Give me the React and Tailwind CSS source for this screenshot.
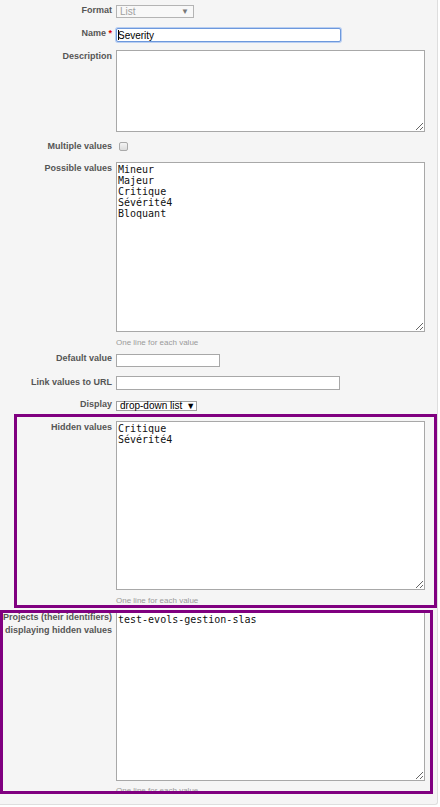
import React from 'react';

const SANS = { fontFamily: '"Liberation Sans", Arial, sans-serif' };
const MONO = { fontFamily: '"DejaVu Sans Mono", monospace' };

/** Right-aligned bold label in the 112px left column. */
function Label({ children, className = '' }) {
  return (
    <label
      style={SANS}
      className={`w-[112px] shrink-0 text-right text-[9px] leading-[13px] font-bold text-[#555] ${className}`}
    >
      {children}
    </label>
  );
}

function Hint({ className = '' }) {
  return (
    <p style={SANS} className={`ml-[116px] text-[8px] leading-[10px] text-[#9a9a9a] ${className}`}>
      One line for each value
    </p>
  );
}

function Area({ value = '', className = '' }) {
  return (
    <textarea
      readOnly
      value={value}
      style={MONO}
      className={`w-[309px] resize border border-[#a8a8a8] bg-white px-[1px] pt-[1px] text-[10px] leading-[11px] text-[#111] outline-none ${className}`}
    />
  );
}

export default function App() {
  return (
    <div className="w-[440px] h-[807px] bg-white">
      <div className="relative w-[438px] h-[805px] overflow-hidden bg-[#f5f5f5] border-r border-b border-[#dedede] rounded-br-[3px]">
        <div className="flex flex-col pt-[5px]">
          {/* Format */}
          <div className="flex items-start gap-[4px]">
            <Label className="mt-[-1px]">Format</Label>
            <div
              style={SANS}
              className="flex h-[13px] w-[78px] items-center justify-between border border-[#b4b4b4] bg-[#f8f8f8] pl-[3px] pr-[4px] text-[10px] text-[#a0a0a0]"
            >
              <span>List</span>
              <span className="text-[8px] text-[#777]">▼</span>
            </div>
          </div>

          {/* Name */}
          <div className="mt-[10px] flex items-start gap-[4px]">
            <Label className="mt-[-1px]">
              Name <span className="text-[#d00]">*</span>
            </Label>
            <div
              style={SANS}
              className="relative flex h-[14px] w-[225px] items-center rounded-[2px] border border-[#6d98dc] bg-white pl-[1px] text-[10px] text-black ring-1 ring-[#b9cff2]"
            >
              <span className="absolute left-[1px] top-[1px] h-[10px] w-px bg-black" />
              <span>Severity</span>
            </div>
          </div>

          {/* Description */}
          <div className="mt-[8px] flex items-start gap-[4px]">
            <Label>Description</Label>
            <Area className="h-[82px]" />
          </div>

          {/* Multiple values */}
          <div className="mt-[8px] flex items-start gap-[4px]">
            <Label>Multiple values</Label>
            <span className="ml-[3px] mt-[2px] h-[9px] w-[9px] rounded-[2px] border border-[#a9a9a9] bg-gradient-to-b from-[#f4f4f4] to-[#dcdcdc]" />
          </div>

          {/* Possible values */}
          <div className="mt-[9px] flex items-start gap-[4px]">
            <Label>Possible values</Label>
            <Area className="h-[170px]" value={'Mineur\nMajeur\nCritique\nSévérité4\nBloquant'} />
          </div>
          <Hint className="mt-[6px]" />

          {/* Default value */}
          <div className="mt-[6px] flex items-start gap-[4px]">
            <Label className="mt-[-2px]">Default value</Label>
            <div className="h-[13px] w-[104px] border border-[#a8a8a8] bg-white" />
          </div>

          {/* Link values to URL */}
          <div className="mt-[9px] flex items-start gap-[4px]">
            <Label>Link values to URL</Label>
            <div className="h-[14px] w-[224px] border border-[#a8a8a8] bg-white" />
          </div>

          {/* Display */}
          <div className="mt-[11px] flex items-start gap-[4px]">
            <Label className="mt-[-3px]">Display</Label>
            <div
              style={SANS}
              className="flex h-[10px] w-[81px] items-center border border-[#a0a0a0] bg-white pl-[3px] text-[10px] leading-[10px] text-black"
            >
              <span>drop-down list</span>
              <span className="ml-[4px] text-[9px]">▼</span>
            </div>
          </div>

          {/* Hidden values */}
          <div className="mt-[10px] flex items-start gap-[4px]">
            <Label>Hidden values</Label>
            <Area className="h-[169px]" value={'Critique\nSévérité4'} />
          </div>
          <Hint className="mt-[6px]" />

          {/* Projects displaying hidden values */}
          <div className="mt-[6px] flex items-start gap-[4px]">
            <Label className="mt-[-1px]">Projects (their identifiers) displaying hidden values</Label>
            <Area className="h-[169px]" value="test-evols-gestion-slas" />
          </div>
          <Hint className="mt-[5px]" />
        </div>

        {/* annotation frames drawn over the form */}
        <div className="pointer-events-none absolute left-[14px] top-[414px] h-[194px] w-[423px] border-[3px] border-[#800080]" />
        <div className="pointer-events-none absolute left-0 top-[610px] h-[184px] w-[433px] border-[3px] border-[#800080]" />
      </div>
    </div>
  );
}
